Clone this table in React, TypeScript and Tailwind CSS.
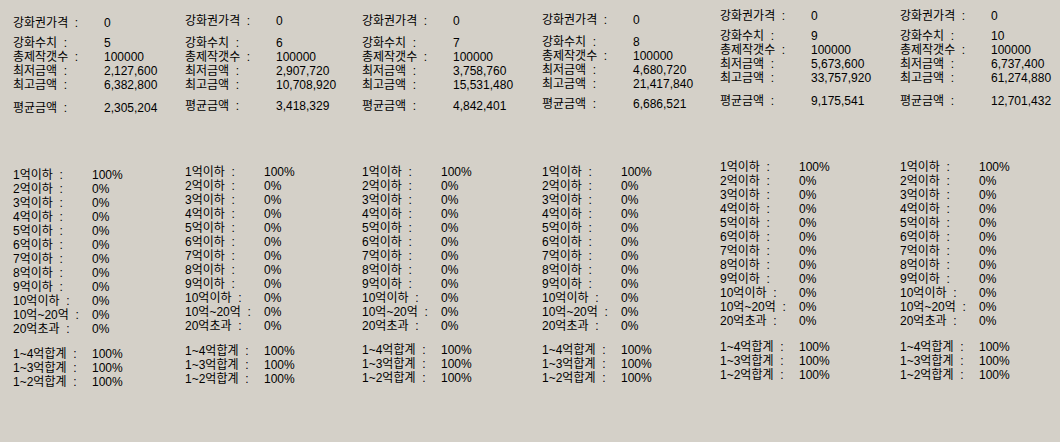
const font = { fontFamily: '"Liberation Sans", "Noto Sans CJK KR", sans-serif' };

type Col = {
  w: string;
  pt: string;
  g1: string;
  g2: string;
  g3: string;
  g4: string;
  level: string;
  min: string;
  max: string;
  avg: string;
};

const cols: Col[] = [
  { w: "w-[172px]", pt: "pt-[16px]", g1: "mt-[6px]", g2: "mt-[9px]", g3: "mt-[53px]", g4: "mt-[11px]", level: "5", min: "2,127,600", max: "6,382,800", avg: "2,305,204" },
  { w: "w-[177px]", pt: "pt-[14px]", g1: "mt-[8px]", g2: "mt-[7px]", g3: "mt-[52px]", g4: "mt-[11px]", level: "6", min: "2,907,720", max: "10,708,920", avg: "3,418,329" },
  { w: "w-[180px]", pt: "pt-[14px]", g1: "mt-[8px]", g2: "mt-[7px]", g3: "mt-[52px]", g4: "mt-[10px]", level: "7", min: "3,758,760", max: "15,531,480", avg: "4,842,401" },
  { w: "w-[178px]", pt: "pt-[13px]", g1: "mt-[8px]", g2: "mt-[6px]", g3: "mt-[54px]", g4: "mt-[10px]", level: "8", min: "4,680,720", max: "21,417,840", avg: "6,686,521" },
  { w: "w-[180px]", pt: "pt-[9px]", g1: "mt-[6px]", g2: "mt-[9px]", g3: "mt-[52px]", g4: "mt-[12px]", level: "9", min: "5,673,600", max: "33,757,920", avg: "9,175,541" },
  { w: "w-[160px]", pt: "pt-[9px]", g1: "mt-[6px]", g2: "mt-[9px]", g3: "mt-[52px]", g4: "mt-[12px]", level: "10", min: "6,737,400", max: "61,274,880", avg: "12,701,432" },
];

const ranges = [
  ["1억이하  :", "100%"],
  ["2억이하  :", "0%"],
  ["3억이하  :", "0%"],
  ["4억이하  :", "0%"],
  ["5억이하  :", "0%"],
  ["6억이하  :", "0%"],
  ["7억이하  :", "0%"],
  ["8억이하  :", "0%"],
  ["9억이하  :", "0%"],
  ["10억이하  :", "0%"],
  ["10억~20억  :", "0%"],
  ["20억초과  :", "0%"],
];

const sums = [
  ["1~4억합계  :", "100%"],
  ["1~3억합계  :", "100%"],
  ["1~2억합계  :", "100%"],
];

function Row({ label, value, wide }: { label: string; value: string; wide?: boolean }) {
  return (
    <div className="flex h-[14px] leading-[14px] whitespace-pre">
      <span className={wide ? "w-[91px] shrink-0" : "w-[79px] shrink-0"}>{label}</span>
      <span>{value}</span>
    </div>
  );
}

function Column({ c }: { c: Col }) {
  return (
    <div className={`${c.w} ${c.pt} shrink-0 flex flex-col`}>
      <Row wide label="강화권가격  :" value="0" />
      <div className={c.g1}>
        <Row wide label="강화수치  :" value={c.level} />
        <Row wide label="총제작갯수  :" value="100000" />
        <Row wide label="최저금액  :" value={c.min} />
        <Row wide label="최고금액  :" value={c.max} />
      </div>
      <div className={c.g2}>
        <Row wide label="평균금액  :" value={c.avg} />
      </div>
      <div className={c.g3}>
        {ranges.map(([l, v]) => (
          <Row key={l} label={l} value={v} />
        ))}
      </div>
      <div className={c.g4}>
        {sums.map(([l, v]) => (
          <Row key={l} label={l} value={v} />
        ))}
      </div>
    </div>
  );
}

export default function App() {
  return (
    <div className="w-[1060px] h-[442px] bg-[#d4d0c8] text-black text-[12px] flex pl-[13px] overflow-hidden" style={font}>
      {cols.map((c) => (
        <Column key={c.level} c={c} />
      ))}
    </div>
  );
}
